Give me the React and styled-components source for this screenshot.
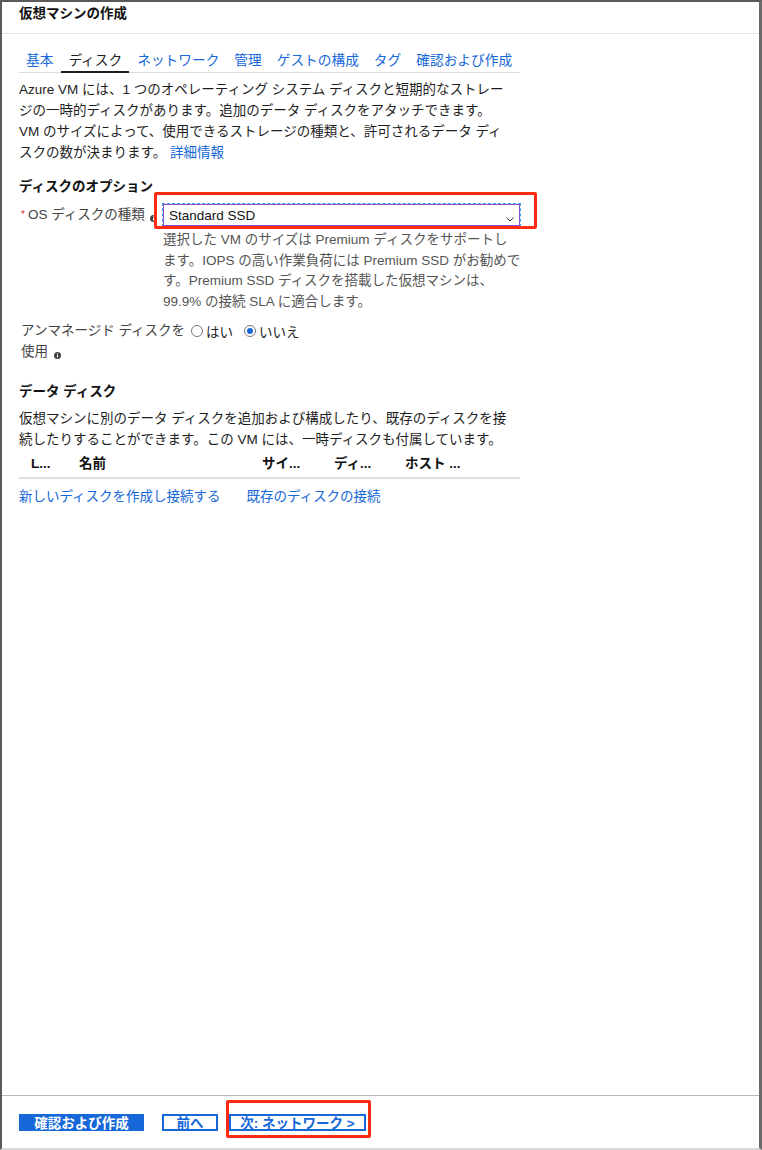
import React from 'react'
import styled, { createGlobalStyle } from 'styled-components'

const GlobalStyle = createGlobalStyle`
    body {
        margin: 0;
        background: #fff;
        font-family: "Liberation Sans", "Noto Sans CJK JP", sans-serif;
        color: #1e1e1e;
    }
`

const tabs = ["基本", "ディスク", "ネットワーク", "管理", "ゲストの構成", "タグ", "確認および作成"]

const columns = [
    { label: "L...", width: 48 },
    { label: "名前", width: 183 },
    { label: "サイ...", width: 72 },
    { label: "ディ...", width: 71 },
    { label: "ホスト ...", width: 100 },
]

const InfoIcon = () => (
    <svg width="7" height="7" viewBox="0 0 8 8">
        <circle cx="4" cy="4" r="4" fill="#444" />
        <rect x="3.4" y="3.3" width="1.2" height="3" fill="#fff" />
        <rect x="3.4" y="1.6" width="1.2" height="1.1" fill="#fff" />
    </svg>
)

const App = () => {
    return (
        <>
            <GlobalStyle />
            <Frame>
                <Header>仮想マシンの作成</Header>
                <Content>
                    <Tabs>
                        {tabs.map(t => (
                            <Tab key={t} active={t === "ディスク"}>{t}</Tab>
                        ))}
                    </Tabs>

                    <Paragraph>
                        Azure VM には、1 つのオペレーティング システム ディスクと短期的なストレー<br />
                        ジの一時的ディスクがあります。追加のデータ ディスクをアタッチできます。<br />
                        VM のサイズによって、使用できるストレージの種類と、許可されるデータ ディ<br />
                        スクの数が決まります。 <Link>詳細情報</Link>
                    </Paragraph>

                    <SectionTitle space={14}>ディスクのオプション</SectionTitle>
                    <FormRow>
                        <Label width={144}>
                            <Required>*</Required>OS ディスクの種類 <InfoIcon />
                        </Label>
                        <Field>
                            <SelectWrap>
                                <Select>
                                    <span>Standard SSD</span>
                                    <svg width="8" height="5" viewBox="0 0 8 5">
                                        <path d="M0.5 0.5 L4 4 L7.5 0.5" fill="none" stroke="#333" strokeWidth="1" />
                                    </svg>
                                </Select>
                                <Highlight />
                            </SelectWrap>
                            <Help>
                                選択した VM のサイズは Premium ディスクをサポートし<br />
                                ます。IOPS の高い作業負荷には Premium SSD がお勧めで<br />
                                す。Premium SSD ディスクを搭載した仮想マシンは、<br />
                                99.9% の接続 SLA に適合します。
                            </Help>
                        </Field>
                    </FormRow>

                    <RadioRow>
                        <Label width={172}>
                            アンマネージド ディスクを<br />使用 <InfoIcon />
                        </Label>
                        <RadioGroup>
                            <RadioOption><Radio /> はい</RadioOption>
                            <RadioOption><Radio checked /> いいえ</RadioOption>
                        </RadioGroup>
                    </RadioRow>

                    <SectionTitle space={20}>データ ディスク</SectionTitle>
                    <Paragraph>
                        仮想マシンに別のデータ ディスクを追加および構成したり、既存のディスクを接<br />
                        続したりすることができます。この VM には、一時ディスクも付属しています。
                    </Paragraph>
                    <TableHead>
                        {columns.map(c => (
                            <HeadCell key={c.label} width={c.width}>{c.label}</HeadCell>
                        ))}
                    </TableHead>
                    <LinkRow>
                        <Link>新しいディスクを作成し接続する</Link>
                        <Link>既存のディスクの接続</Link>
                    </LinkRow>
                </Content>
                <Footer>
                    <Button primary>確認および作成</Button>
                    <Button width={56}>前へ</Button>
                    <NextWrap>
                        <Button width={137}>次: ネットワーク &gt;</Button>
                        <Highlight />
                    </NextWrap>
                </Footer>
            </Frame>
        </>
    )
}

export default App

const Frame = styled.div`
    width: 762px;
    height: 1150px;
    box-sizing: border-box;
    border-left: 2px solid #5a5a5a;
    border-right: 3px solid #6a6a6a;
    border-top: 2px solid #5a5a5a;
    border-bottom: 2px solid #d8d8d8;
    display: flex;
    flex-direction: column;
    background: #fff;
`

const Header = styled.div`
    height: 32px;
    box-sizing: border-box;
    padding: 0 17px;
    border-bottom: 1px solid #e2e2e2;
    font-size: 13.5px;
    font-weight: 700;
    color: #111;
`

const Content = styled.div`
    flex: 1;
    padding: 0 17px;
`

const Tabs = styled.div`
    display: flex;
    gap: 1px;
    width: 501px;
    margin-top: 17px;
    border-bottom: 1px solid #dcdcdc;
`

const Tab = styled.div`
    padding: 1px 7px 1px;
    font-size: 13.7px;
    line-height: 18px;
    color: ${p => p.active ? "#1e1e1e" : "#1668d8"};
    border-bottom: 2px solid ${p => p.active ? "#1e1e1e" : "transparent"};
    margin-bottom: -1px;
`

const Paragraph = styled.p`
    margin: 6px 0 0;
    font-size: 13.5px;
    line-height: 21px;
    color: #1e1e1e;
    white-space: nowrap;
`

const Link = styled.span`
    color: #1668d8;
    cursor: pointer;
`

const SectionTitle = styled.div`
    margin-top: ${p => p.space}px;
    font-size: 13.5px;
    font-weight: 700;
    line-height: 20px;
    color: #111;
`

const FormRow = styled.div`
    display: flex;
    margin-top: 7px;
`

const Label = styled.div`
    width: ${p => p.width}px;
    flex-shrink: 0;
    box-sizing: border-box;
    padding-left: 2px;
    font-size: 13.5px;
    line-height: 21px;
    color: #444;
    white-space: nowrap;

    svg {
        vertical-align: -3px;
        margin-left: 2px;
    }
`

const Required = styled.span`
    color: #e0301e;
    font-size: 10px;
    margin-right: 3px;
    vertical-align: 1px;
`

const Field = styled.div`
    display: flex;
    flex-direction: column;
`

const SelectWrap = styled.div`
    position: relative;
    width: 357px;
`

const Select = styled.div`
    height: 22px;
    box-sizing: border-box;
    border: 1px solid #8a4fd0;
    outline: 1px dashed #3aa0e8;
    outline-offset: 0px;
    display: flex;
    align-items: center;
    justify-content: space-between;
    padding: 0 5px 0 5px;
    font-size: 13.5px;
    color: #111;

    svg {
        margin-top: 8px;
    }
`

const Highlight = styled.div`
    position: absolute;
    left: -9px;
    right: -17px;
    top: -12px;
    bottom: -3px;
    border: 3px solid #ff2a12;
    border-radius: 2px;
    pointer-events: none;
`

const Help = styled.div`
    margin-top: 4px;
    font-size: 13.5px;
    line-height: 20.5px;
    color: #555;
    white-space: nowrap;
`

const RadioRow = styled.div`
    display: flex;
    margin-top: 8px;
`

const RadioGroup = styled.div`
    display: flex;
    gap: 11px;
    height: 21px;
    align-items: center;
`

const RadioOption = styled.label`
    display: flex;
    align-items: center;
    gap: 3px;
    font-size: 13.5px;
    color: #222;
`

const Radio = styled.span`
    width: 12px;
    height: 12px;
    box-sizing: border-box;
    border-radius: 50%;
    border: 1px solid #777;
    display: inline-flex;
    align-items: center;
    justify-content: center;

    &::after {
        content: "";
        width: 6px;
        height: 6px;
        border-radius: 50%;
        background: ${p => p.checked ? "#1668d8" : "transparent"};
    }
`

const TableHead = styled.div`
    display: flex;
    width: 501px;
    margin-top: 4px;
    padding: 0 0 3px 12px;
    box-sizing: border-box;
    border-bottom: 2px solid #dedede;
`

const HeadCell = styled.div`
    width: ${p => p.width}px;
    font-size: 13.5px;
    font-weight: 700;
    line-height: 20px;
    color: #111;
`

const LinkRow = styled.div`
    display: flex;
    gap: 26px;
    margin-top: 8px;
    font-size: 13.5px;
    line-height: 20px;
`

const Footer = styled.div`
    height: 53px;
    box-sizing: border-box;
    border-top: 1px solid #b8b8b8;
    display: flex;
    align-items: center;
    gap: 18px;
    padding: 0 17px 0;
`

const Button = styled.div`
    height: 17px;
    box-sizing: border-box;
    width: ${p => p.width ? `${p.width}px` : "125px"};
    display: flex;
    align-items: center;
    justify-content: center;
    font-size: 13.5px;
    font-weight: 700;
    color: ${p => p.primary ? "#fff" : "#1668d8"};
    background: ${p => p.primary ? "#1668d8" : "#fff"};
    border: 2px solid #1668d8;
`

const NextWrap = styled.div`
    position: relative;
    margin-left: -7px;

    ${Highlight} {
        left: -3px;
        right: -5px;
        top: -14px;
        bottom: -7px;
    }
`
